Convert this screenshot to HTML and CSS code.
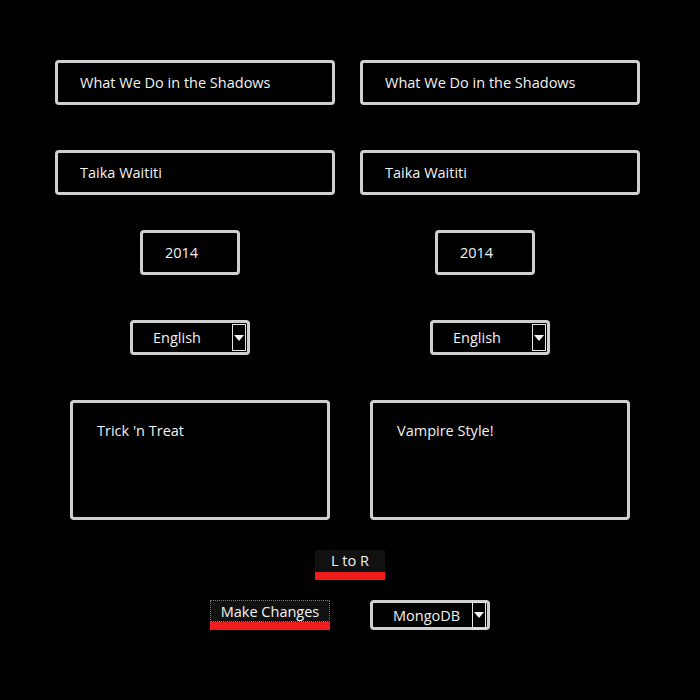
FILE: index.html
```html
<!DOCTYPE html>
<html lang="en">
<head>
    <meta charset="UTF-8">
    <meta name="viewport" content="width=device-width, initial-scale=1.0">
    <title>Movie Editor</title>
    <link rel="stylesheet" href="styles.css">
</head>
<body>
    <div class="page">
        <!-- titles -->
        <div class="row row_title">
            <input type="text" class="field wide" value="What We Do in the Shadows">
            <input type="text" class="field wide" value="What We Do in the Shadows">
        </div>
        <!-- directors -->
        <div class="row row_dir">
            <input type="text" class="field wide" value="Taika Waititi">
            <input type="text" class="field wide" value="Taika Waititi">
        </div>
        <!-- year -->
        <div class="row row_year">
            <input type="text" class="field year" value="2014">
            <input type="text" class="field year" value="2014">
        </div>
        <!-- language -->
        <div class="row row_lang">
            <div class="sel"><span>English</span><i class="arrow"></i></div>
            <div class="sel"><span>English</span><i class="arrow"></i></div>
        </div>
        <!-- notes -->
        <div class="row row_note">
            <textarea class="note">Trick 'n Treat</textarea>
            <textarea class="note">Vampire Style!</textarea>
        </div>
        <div class="row row_copy">
            <a href="#" class="btn copy">L to R</a>
        </div>
        <div class="row row_save">
            <a href="#" class="btn save">Make Changes</a>
            <div class="sel db"><span>MongoDB</span><i class="arrow"></i></div>
        </div>
    </div>
</body>
</html>
```
FILE: styles.css
```css
*{
    margin: 0;
    padding: 0;
    box-sizing: border-box;
}
body{
    background: #000;
    color: #f2f2f2;
    font-family: "Open Sans", "Noto Sans", sans-serif;
    font-size: 14.5px;
}
.page{
    padding-top: 60px;
}
.row{
    display: flex;
}
.field, .note{
    background: #000;
    color: #f2f2f2;
    font-family: inherit;
    font-size: 14.5px;
    border: 3px solid #cfcfcf;
    border-radius: 4px;
    outline: none;
}
.row_title, .row_dir{
    padding-left: 55px;
    gap: 25px;
}
.wide{
    width: 280px;
    height: 45px;
    padding-left: 22px;
}
.row_dir{
    margin-top: 45px;
}
.row_year{
    margin-top: 35px;
    padding-left: 140px;
    gap: 195px;
}
.year{
    width: 100px;
    height: 45px;
    padding-left: 22px;
}
.row_lang{
    margin-top: 45px;
    padding-left: 130px;
    gap: 180px;
}
.sel{
    width: 120px;
    height: 35px;
    border: 3px solid #cfcfcf;
    border-radius: 4px;
    display: flex;
    align-items: center;
    padding: 0 1px 0 0;
}
.sel span{
    flex: 1;
    padding-left: 20px;
}
.arrow{
    width: 14px;
    height: 27px;
    border: 1px solid #e6e6e6;
    display: flex;
    align-items: center;
    justify-content: center;
}
.arrow::after{
    content: "";
    border-left: 5px solid transparent;
    border-right: 5px solid transparent;
    border-top: 6px solid #f2f2f2;
}
.row_note{
    margin-top: 45px;
    padding-left: 70px;
    gap: 40px;
}
.note{
    width: 260px;
    height: 120px;
    padding: 18px 24px;
    resize: none;
    line-height: 20px;
}
.btn{
    display: block;
    text-decoration: none;
    color: #f2f2f2;
    background: #111;
    text-align: center;
}
.row_copy{
    margin-top: 30px;
    padding-left: 315px;
}
.copy{
    width: 70px;
    height: 30px;
    line-height: 22px;
    border-bottom: 8px solid #ee1c1c;
}
.row_save{
    margin-top: 20px;
    padding-left: 210px;
    gap: 40px;
}
.save{
    width: 120px;
    height: 30px;
    line-height: 23px;
    border-bottom: 8px solid #ee1c1c;
    position: relative;
}
.save::before{
    content: "";
    position: absolute;
    top: 0;
    left: 0;
    right: 0;
    bottom: 0;
    border: 1px dotted #777;
}
.db{
    height: 30px;
}
.db span{
    padding-left: 20px;
}
```
